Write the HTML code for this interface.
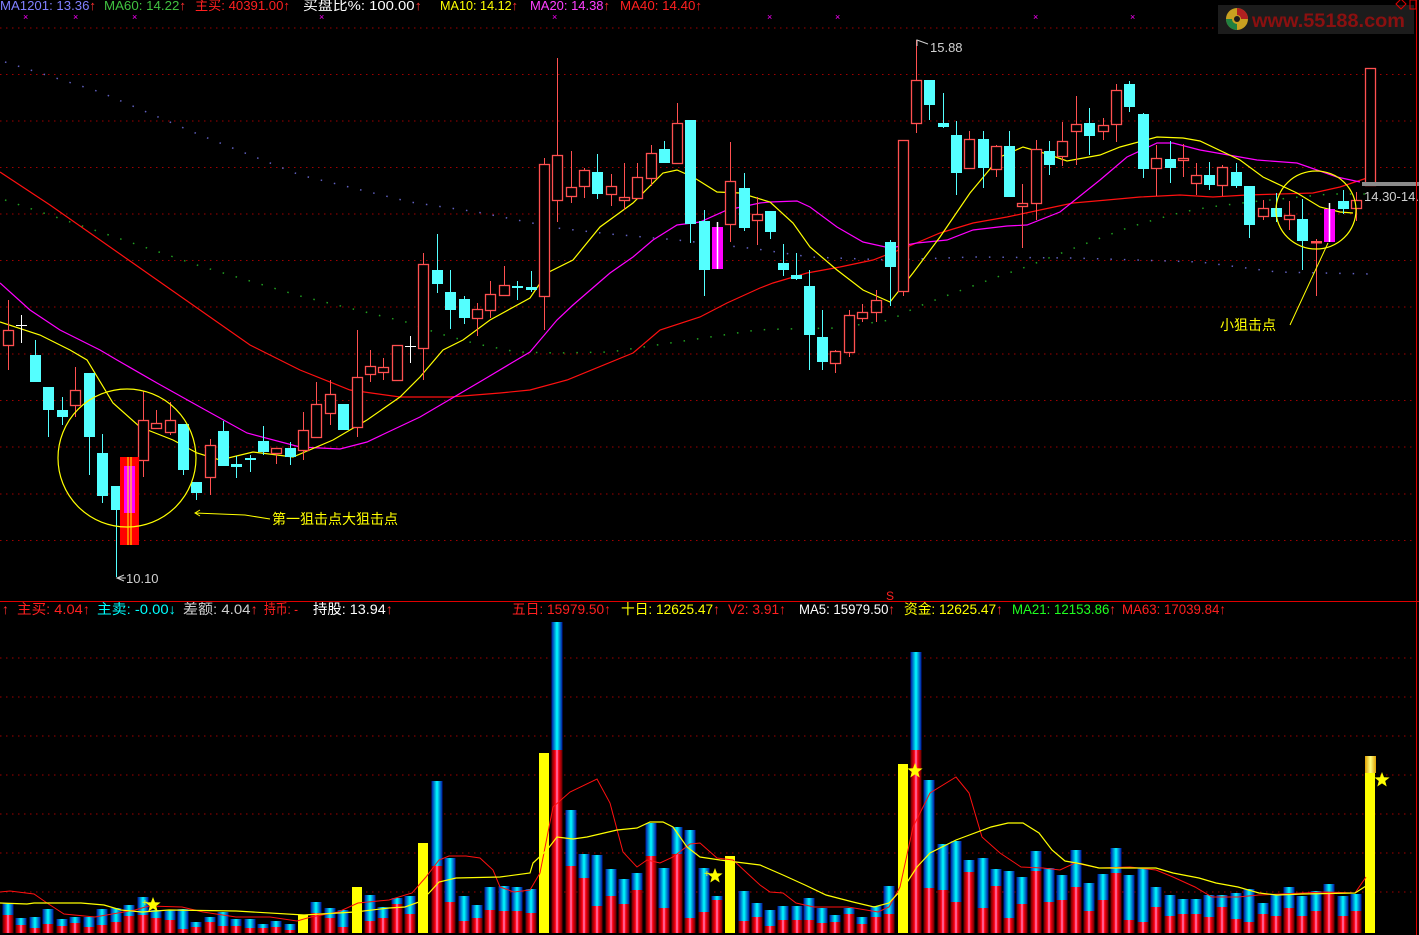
<!DOCTYPE html>
<html><head><meta charset="utf-8"><style>
html,body{margin:0;padding:0;background:#000;width:1419px;height:935px;overflow:hidden}
svg{display:block}
text{font-family:"Liberation Sans","Noto Sans CJK SC",sans-serif}
</style></head><body>
<svg id="s" width="1419" height="935" viewBox="0 0 1419 935" xmlns="http://www.w3.org/2000/svg">
<defs>
<linearGradient id="gb" x1="0" x2="1" y1="0" y2="0"><stop offset="0" stop-color="#0010a0"/><stop offset=".5" stop-color="#00ffff"/><stop offset="1" stop-color="#0010a0"/></linearGradient>
<linearGradient id="gr" x1="0" x2="1" y1="0" y2="0"><stop offset="0" stop-color="#600000"/><stop offset=".35" stop-color="#ff0010"/><stop offset=".5" stop-color="#ff80c0"/><stop offset=".65" stop-color="#ff0010"/><stop offset="1" stop-color="#600000"/></linearGradient>
<linearGradient id="gy" x1="0" x2="1" y1="0" y2="0"><stop offset="0" stop-color="#e0a000"/><stop offset=".5" stop-color="#ffff80"/><stop offset="1" stop-color="#e0a000"/></linearGradient>
</defs>
<g id="grid"></g>
<g id="content"></g>
<!-- logo -->
<rect x="1218" y="5" width="196" height="29" fill="#1c1c1c"/>
<circle cx="1237" cy="19" r="11" fill="#c8a020"/>
<path d="M1237 8 A11 11 0 0 1 1248 19 L1241 19 A4 4 0 0 0 1237 15Z" fill="#b02020"/>
<path d="M1226 19 A11 11 0 0 0 1237 30 L1237 24 A5 5 0 0 1 1232 19Z" fill="#208040"/>
<circle cx="1237" cy="19" r="3" fill="#1c1c1c"/>
<text x="1252" y="27" font-size="19" font-weight="bold" fill="#8a1010" textLength="153" lengthAdjust="spacingAndGlyphs" style="font-family:'Liberation Sans',sans-serif">www.55188.com</text>
<path d="M1396 4 L1401 -1 L1406 4 L1401 9Z" fill="none" stroke="#e00000"/>
<rect x="1410" y="0" width="6" height="9" fill="none" stroke="#e00000"/>
<line x1="1416.5" y1="0" x2="1416.5" y2="935" stroke="#e00000"/>
<!-- header top -->
<g font-size="13" lengthAdjust="spacingAndGlyphs">
<text x="0" y="10" fill="#8080ff" textLength="96" lengthAdjust="spacingAndGlyphs">MA1201: 13.36<tspan fill="#ff3030">↑</tspan></text>
<text x="104" y="10" fill="#40c040" textLength="82" lengthAdjust="spacingAndGlyphs">MA60: 14.22<tspan fill="#ff3030">↑</tspan></text>
<text x="195" y="10" fill="#ff2020" textLength="95" lengthAdjust="spacingAndGlyphs">主买: 40391.00↑</text>
<text x="303" y="10" fill="#ffffff" textLength="119" lengthAdjust="spacingAndGlyphs">买盘比%: 100.00<tspan fill="#ff3030">↑</tspan></text>
<text x="440" y="10" fill="#ffff00" textLength="78" lengthAdjust="spacingAndGlyphs">MA10: 14.12<tspan fill="#ff3030">↑</tspan></text>
<text x="530" y="10" fill="#ff40ff" textLength="80" lengthAdjust="spacingAndGlyphs">MA20: 14.38<tspan fill="#ff3030">↑</tspan></text>
<text x="620" y="10" fill="#ff2020" textLength="82" lengthAdjust="spacingAndGlyphs">MA40: 14.40↑</text>
</g>
<g font-size="14">
<text x="2" y="614" fill="#ff3030">↑</text>
<text x="17" y="614" fill="#ff2020" textLength="73" lengthAdjust="spacingAndGlyphs">主买: 4.04↑</text>
<text x="97" y="614" fill="#00ffff" textLength="79" lengthAdjust="spacingAndGlyphs">主卖: -0.00↓</text>
<text x="183" y="614" fill="#d0d0d0" textLength="75" lengthAdjust="spacingAndGlyphs">差额: 4.04<tspan fill="#ff3030">↑</tspan></text>
<text x="264" y="614" fill="#ff2020" textLength="34" lengthAdjust="spacingAndGlyphs">持币: -</text>
<text x="313" y="614" fill="#ffffff" textLength="80" lengthAdjust="spacingAndGlyphs">持股: 13.94<tspan fill="#ff3030">↑</tspan></text>
<text x="512" y="614" fill="#ff2020" textLength="99" lengthAdjust="spacingAndGlyphs">五日: 15979.50↑</text>
<text x="621" y="614" fill="#ffff00" textLength="99" lengthAdjust="spacingAndGlyphs">十日: 12625.47<tspan fill="#ff3030">↑</tspan></text>
<text x="728" y="614" fill="#ff2020" textLength="58" lengthAdjust="spacingAndGlyphs">V2: 3.91↑</text>
<text x="799" y="614" fill="#ffffff" textLength="96" lengthAdjust="spacingAndGlyphs">MA5: 15979.50<tspan fill="#ff3030">↑</tspan></text>
<text x="904" y="614" fill="#ffff00" textLength="99" lengthAdjust="spacingAndGlyphs">资金: 12625.47<tspan fill="#ff3030">↑</tspan></text>
<text x="1012" y="614" fill="#20ff20" textLength="104" lengthAdjust="spacingAndGlyphs">MA21: 12153.86<tspan fill="#ff3030">↑</tspan></text>
<text x="1122" y="614" fill="#ff2020" textLength="104" lengthAdjust="spacingAndGlyphs">MA63: 17039.84↑</text>
</g>
<text x="886" y="600" font-size="12" fill="#ff2020">S</text>
<line x1="0" y1="601.5" x2="1419" y2="601.5" stroke="#e00000"/>
</svg>
<script>
var NS="http://www.w3.org/2000/svg";
var G=document.getElementById('content'),GR=document.getElementById('grid');
function el(t,a,p){var e=document.createElementNS(NS,t);for(var k in a)e.setAttribute(k,a[k]);(p||G).appendChild(e);return e;}
[28,74.5,121,167.5,214,260.5,307,354,400.5,447,494,540.5].forEach(function(y){el('line',{x1:0,x2:1415,y1:y,y2:y,stroke:'#a00000','stroke-dasharray':'1.5 4.5'},GR)});
[658,697,736,775,814,853,892].forEach(function(y){el('line',{x1:0,x2:1415,y1:y,y2:y,stroke:'#a00000','stroke-dasharray':'1.5 4.5'},GR)});
[26,76,135,322,555,770,838,1036,1133].forEach(function(x){el('text',{x:x-3,y:20,'font-size':9,fill:'#ff00ff'},GR).textContent='×'});
function pl(pts,st){return el('polyline',{points:pts,fill:'none',stroke:st.c,'stroke-width':st.w||1.2,'stroke-dasharray':st.d||''});}
pl("5,62 100,92 200,135 300,175 410,202 477,212 517,220 557,228 610,234 677,240 757,249 810,257 890,260 973,257 1073,258 1200,262 1277,272 1370,274",{c:'#6060c0',w:1.5,d:'1.5 12'});
pl("5,200 100,232 200,266 300,296 410,323 437,333 477,344 517,352 557,353 610,352 650,346 690,340 717,336 757,330 783,329 837,328 890,320 917,307 943,297 970,287 997,277 1023,268 1077,247 1103,237 1130,227 1157,219 1183,212 1210,207 1250,202 1330,194 1370,194",{c:'#20a020',w:1.5,d:'1.5 12'});
pl("0,172 50,205 100,240 150,275 200,310 250,345 300,370 350,390 400,397 450,397 500,393 530,390 567,380 633,353 660,330 700,317 727,303 760,288 773,283 807,273 840,267 873,260 907,247 940,233 973,223 1007,217 1040,210 1073,203 1107,200 1140,197 1180,195 1213,197 1247,195 1313,193 1340,187 1367,178",{c:'#ff1010'});
pl("0,283 30,310 60,330 100,350 117,360 157,383 200,407 247,433 300,447 340,449 367,442 420,417 483,380 530,352 557,320 573,305 610,273 633,257 653,240 677,225 700,222 727,210 760,203 770,202 797,201 810,207 837,227 863,242 890,248 917,243 947,240 973,230 1007,226 1027,225 1060,212 1100,180 1127,157 1157,143 1173,143 1200,150 1257,160 1297,163 1337,177 1360,182",{c:'#ff00ff'});
pl("0,322 40,335 70,350 87,360 113,403 140,427 173,440 197,453 220,460 253,452 293,457 333,440 367,420 400,397 420,377 443,350 463,340 490,320 530,298 547,273 573,260 600,227 633,203 663,173 677,170 693,177 717,192 740,193 770,202 793,223 810,247 837,270 863,290 890,302 913,273 940,237 970,193 1000,157 1023,147 1047,154 1067,161 1100,155 1120,147 1157,137 1183,138 1200,141 1240,160 1263,177 1297,193 1320,207 1340,212 1353,213",{c:'#ffff00'});
var C=[[8,'r',330,345,300,370],[21,'w',325,325,315,343],[35,'c',355,382,340,382],[48,'c',387,410,387,437],[62,'c',410,417,397,425],[75,'r',390,405,367,417],[89,'c',373,437,373,475],[102,'c',453,496,434,503],[116,'c',486,510,486,577],[143,'r',420,460,391,477],[156,'r',423,428,410,428],[170,'r',420,432,402,435],[183,'c',424,470,424,475],[196,'c',482,493,482,500],[210,'r',445,477,439,495],[223,'c',431,466,421,466],[236,'c',464,467,456,478],[250,'c',458,460,455,472],[263,'c',441,452,426,455],[276,'r',448,453,448,464],[290,'c',448,457,442,465],[303,'r',430,450,412,460],[316,'r',404,437,382,437],[330,'r',394,413,380,425],[343,'c',404,430,404,430],[357,'r',377,427,330,437],[370,'r',366,374,350,382],[383,'r',367,372,358,380],[397,'r',345,380,345,380],[410,'w',346,346,336,363],[423,'r',264,348,253,380],[437,'c',270,284,234,293],[450,'c',292,310,270,329],[464,'c',299,318,296,324],[477,'r',309,318,303,336],[490,'r',294,310,281,318],[504,'r',285,295,266,295],[517,'c',286,288,281,300],[531,'c',287,290,271,292],[544,'r',164,296,158,330],[557,'r',155,200,58,222],[571,'r',187,196,151,203],[584,'r',170,186,168,198],[597,'c',172,194,154,199],[611,'r',186,194,174,206],[624,'r',197,200,163,210],[637,'r',177,198,163,198],[651,'r',153,178,145,186],[664,'c',149,163,141,163],[677,'r',123,163,103,163],[690,'c',120,224,120,243],[704,'c',221,270,210,296],[717,'m',227,269,222,269],[730,'r',181,224,142,242],[744,'c',188,228,173,231],[757,'r',214,220,197,245],[770,'c',211,232,211,239],[783,'c',263,270,244,276],[796,'c',275,279,253,280],[809,'c',286,335,270,370],[822,'c',337,362,310,370],[835,'r',351,363,350,373],[849,'r',315,352,310,357],[862,'r',312,318,304,322],[876,'r',300,312,290,322],[890,'c',242,267,240,306],[903,'r',140,291,140,296],[916,'r',80,123,40,133],[929,'c',80,105,80,120],[943,'c',123,127,93,128],[956,'c',135,173,121,195],[969,'r',139,168,131,168],[983,'c',139,168,131,188],[996,'r',146,169,145,177],[1009,'c',146,197,131,197],[1022,'r',203,206,184,248],[1036,'r',149,203,140,220],[1049,'c',151,165,141,175],[1062,'r',141,156,122,166],[1076,'r',124,131,96,165],[1089,'c',123,136,108,155],[1103,'r',125,131,118,140],[1116,'r',90,124,84,142],[1129,'c',84,107,81,112],[1143,'c',114,169,113,178],[1156,'r',158,168,145,196],[1170,'c',159,168,141,183],[1183,'r',158,160,144,177],[1196,'r',175,183,163,195],[1209,'c',175,185,162,190],[1222,'r',167,185,165,196],[1236,'c',172,186,163,188],[1249,'c',186,225,186,238],[1263,'r',208,216,200,220],[1276,'c',208,217,193,222],[1289,'r',215,219,201,230],[1302,'c',219,241,199,270],[1316,'r',242,242,239,296],[1329,'m',209,242,203,242],[1343,'c',201,209,190,214],[1356,'r',200,208,192,221],[1370,'r',68,185,68,185]];
C.forEach(function(c){var x=c[0],t=c[1],a=c[2],b=c[3],h=c[4],l=c[5];
 if(t=='r'){el('line',{x1:x+.5,x2:x+.5,y1:h,y2:l,stroke:'#ff5050'});
  if(b-a<2){el('rect',{x:x-5,y:a-1,width:11,height:2.5,fill:'#ff5050'});}
  else el('rect',{x:x-4.5,y:a+.5,width:10,height:b-a,fill:'#000',stroke:'#ff5050','stroke-width':1.3});}
 else if(t=='c'){el('line',{x1:x+.5,x2:x+.5,y1:h,y2:l,stroke:'#54ffff'});el('rect',{x:x-5,y:a,width:11,height:Math.max(2,b-a),fill:'#54ffff'});}
 else if(t=='m'){el('rect',{x:x-5,y:a,width:11,height:b-a,fill:'#ff00ff'});el('line',{x1:x+.5,x2:x+.5,y1:h,y2:l,stroke:'#fff',"stroke-width":1.5});}
 else {el('line',{x1:x+.5,x2:x+.5,y1:h,y2:l,stroke:'#fff'});el('line',{x1:x-5,x2:x+6,y1:a+.5,y2:a+.5,stroke:'#fff'});}
});
el('rect',{x:120,y:457,width:19,height:88,fill:'#ff0000'});
el('rect',{x:124,y:466,width:11,height:47,fill:'#ff00ff'});
el('line',{x1:128,x2:128,y1:457,y2:545,stroke:'#ffff00'});el('line',{x1:131,x2:131,y1:457,y2:545,stroke:'#ffff00'});
el('ellipse',{cx:127,cy:458,rx:69,ry:69,fill:'none',stroke:'#ffff00','stroke-width':1.2});
el('ellipse',{cx:1316,cy:210,rx:40,ry:39,fill:'none',stroke:'#ffff00','stroke-width':1.2});
el('polyline',{points:'200,510 195,513 200,516 195,513 245,515 270,519',fill:'none',stroke:'#ffff00'});
var t=el('text',{x:272,y:524,'font-size':14,fill:'#ffff00'});t.textContent='第一狙击点大狙击点';
el('line',{x1:1290,y1:325,x2:1328,y2:243,stroke:'#ffff00'});
t=el('text',{x:1220,y:330,'font-size':14,fill:'#ffff00'});t.textContent='小狙击点';
el('polyline',{points:'917,46 917,40 928,44',fill:'none',stroke:'#d0d0d0'});
t=el('text',{x:930,y:52,'font-size':13,fill:'#d0d0d0'});t.textContent='15.88';
el('polyline',{points:'124,575 117,578 124,581 117,578 126,578',fill:'none',stroke:'#d0d0d0'});
t=el('text',{x:126,y:583,'font-size':13,fill:'#d0d0d0'});t.textContent='10.10';
el('rect',{x:1362,y:182,width:57,height:4,fill:'#8c8c8c'});
t=el('text',{x:1364,y:201,'font-size':13,fill:'#d0d0d0'});t.textContent='14.30-14.';
var V=[[8,903,915],[21,918,925],[35,917,928],[48,909,924],[62,919,926],[75,917,923],[89,917,927],[102,909,925],[116,908,922],[129,905,916],[143,897,915],[156,910,918],[170,910,920],[183,909,929],[196,922,927],[210,917,922],[223,912,926],[236,919,926],[250,919,928],[263,924,928],[276,921,927],[290,924,930],[303,'Y',915],[316,902,913],[330,908,918],[343,910,927],[357,'Y',887],[370,895,921],[383,907,918],[397,898,904],[410,896,914],[423,'Y',843],[437,781,866],[450,858,902],[464,896,921],[477,905,918],[490,887,910],[504,886,911],[517,887,911],[531,889,913],[544,'Y',753],[557,622,750],[571,810,866],[584,854,878],[597,855,906],[611,869,896],[624,879,904],[637,873,890],[651,823,856],[664,868,908],[677,827,854],[690,830,918],[704,868,912],[717,896,900],[730,'Y',856],[744,891,921],[757,903,917],[770,910,926],[783,906,920],[797,906,920],[809,898,920],[822,908,923],[835,915,922],[849,908,914],[862,917,924],[876,906,917],[889,886,914],[903,'Y',764],[916,652,750],[929,780,888],[943,844,890],[956,841,902],[969,860,872],[983,858,908],[996,869,886],[1009,871,918],[1022,877,904],[1036,851,871],[1049,868,902],[1062,875,900],[1076,850,887],[1089,883,911],[1103,874,900],[1116,848,873],[1129,875,920],[1143,868,922],[1156,887,907],[1170,895,916],[1183,899,914],[1196,899,914],[1209,895,917],[1222,895,907],[1236,893,919],[1249,889,922],[1263,903,914],[1276,895,916],[1289,887,908],[1302,896,916],[1316,891,911],[1329,884,892],[1343,896,916],[1356,894,911],[1370,'Y',756]];
var B=933;
V.forEach(function(v){var x=v[0];
 if(v[1]=='Y'){el('rect',{x:x-5,y:v[2],width:10,height:B-v[2],fill:'#ffff00'});}
 else{el('rect',{x:x-5.5,y:v[1],width:11,height:v[2]-v[1],fill:'url(#gb)'});el('rect',{x:x-5.5,y:v[2],width:11,height:B-v[2],fill:'url(#gr)'});}
});
el('rect',{x:1365,y:756,width:11,height:17,fill:'url(#gy)'});
pl("0,892 10,891 34,894 47,903 64,914 95,917 135,910 149,906 182,907 203,912 236,917 270,917 297,921 311,917 338,912 358,903 389,900 412,893 426,877 439,860 449,856 466,856 480,858 493,870 500,887 514,892 530,890 540,873 553,807 570,792 597,779 610,803 623,852 637,867 647,860 660,863 673,857 690,844 700,843 717,858 733,860 747,873 760,885 770,892 783,893 796,903 814,907 848,907 878,912 889,907 900,887 913,827 930,793 956,777 969,793 982,837 1000,853 1021,867 1043,868 1060,870 1075,863 1099,868 1130,867 1156,870 1173,877 1195,887 1212,897 1238,897 1259,895 1325,892 1355,893 1366,877",{c:'#ff1010',w:1});
pl("0,903 27,904 34,903 81,903 104,905 121,910 142,912 169,910 236,911 304,915 355,912 389,908 405,907 419,902 429,893 439,882 456,878 500,877 530,873 533,863 547,850 557,837 573,839 587,837 617,830 637,828 650,822 663,822 673,827 687,847 700,857 720,860 760,865 783,875 805,885 826,895 853,902 874,907 889,903 904,887 917,867 930,853 956,840 991,827 1008,823 1023,823 1039,833 1052,850 1065,861 1082,864 1099,868 1156,868 1173,873 1199,878 1216,883 1238,887 1259,893 1277,895 1303,894 1355,893 1366,886",{c:'#ffff00',w:1.2});
function star(cx,cy,r){var p=[];for(var i=0;i<10;i++){var a=-Math.PI/2+i*Math.PI/5,rr=i%2?r*0.42:r;p.push((cx+rr*Math.cos(a)).toFixed(1)+','+(cy+rr*Math.sin(a)).toFixed(1));}el('polygon',{points:p.join(' '),fill:'#ffff00'});}
star(153,905,8);star(715,876,8);star(915,771,8);star(1382,780,8);
[[142,902],[704,873]].forEach(function(p){el('text',{x:p[0],y:p[1]+4,'font-size':10,fill:'#ffff00'}).textContent='+';});
</script>
</body></html>
